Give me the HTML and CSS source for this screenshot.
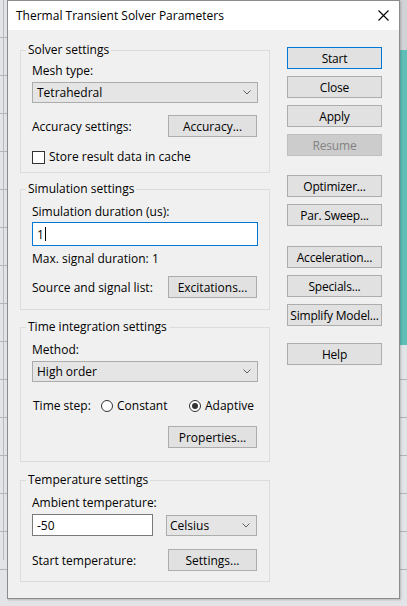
FILE: index.html
```html
<!DOCTYPE html>
<html lang="en">
<head>
<meta charset="utf-8">
<title>Thermal Transient Solver Parameters</title>
<link rel="stylesheet" href="styles.css">
</head>
<body>
<div class="desktop">
  <div class="dialog">
    <div class="titlebar">
      <span class="title">Thermal Transient Solver Parameters</span>
      <svg class="close" width="11" height="11" viewBox="0 0 11 11"><path d="M0.5 0.5 L10.5 10.5 M10.5 0.5 L0.5 10.5" stroke="#000" stroke-width="1.1" fill="none"/></svg>
    </div>
    <div class="client">
      <div class="groups">
        <fieldset class="group g-solver">
          <legend>Solver settings</legend>
          <div class="label mt5">Mesh type:</div>
          <div class="combo mt3"><span>Tetrahedral</span><svg class="chev" width="8" height="5" viewBox="0 0 8 5"><path d="M0.5 0.5 L4 4 L7.5 0.5" stroke="#606060" fill="none"/></svg></div>
          <div class="row mt12"><span>Accuracy settings:</span><span class="btn">Accuracy...</span></div>
          <div class="check mt12"><span class="box"></span><span>Store result data in cache</span></div>
        </fieldset>

        <fieldset class="group g-sim">
          <legend>Simulation settings</legend>
          <div class="label mt7">Simulation duration (us):</div>
          <div class="field focused mt2"><span>1</span><span class="caret"></span></div>
          <div class="label mt5">Max. signal duration: 1</div>
          <div class="row mt9"><span>Source and signal list:</span><span class="btn">Excitations...</span></div>
        </fieldset>

        <fieldset class="group g-time">
          <legend>Time integration settings</legend>
          <div class="label mt7">Method:</div>
          <div class="combo mt3"><span>High order</span><svg class="chev" width="8" height="5" viewBox="0 0 8 5"><path d="M0.5 0.5 L4 4 L7.5 0.5" stroke="#606060" fill="none"/></svg></div>
          <div class="steprow mt16">
            <span class="steplabel">Time step:</span>
            <span class="radio opt-constant"><span class="dot"></span>Constant</span>
            <span class="radio checked"><span class="dot"></span>Adaptive</span>
          </div>
          <div class="row end mt12"><span class="btn">Properties...</span></div>
        </fieldset>

        <fieldset class="group g-temp">
          <legend>Temperature settings</legend>
          <div class="label mt7">Ambient temperature:</div>
          <div class="row mt3">
            <div class="field temp"><span>-50</span></div>
            <div class="combo unit"><span>Celsius</span><svg class="chev" width="8" height="5" viewBox="0 0 8 5"><path d="M0.5 0.5 L4 4 L7.5 0.5" stroke="#606060" fill="none"/></svg></div>
          </div>
          <div class="row mt13"><span>Start temperature:</span><span class="btn">Settings...</span></div>
        </fieldset>
      </div>

      <div class="actions">
        <span class="abtn default">Start</span>
        <span class="abtn mt7">Close</span>
        <span class="abtn mt7">Apply</span>
        <span class="abtn disabled mt7">Resume</span>
        <span class="abtn mt19">Optimizer...</span>
        <span class="abtn mt7">Par. Sweep...</span>
        <span class="abtn mt20">Acceleration...</span>
        <span class="abtn mt7">Specials...</span>
        <span class="abtn mt7">Simplify Model...</span>
        <span class="abtn mt17">Help</span>
      </div>
    </div>
  </div>
</div>
</body>
</html>
```

FILE: styles.css
```css
* { box-sizing: border-box; }

html, body {
  margin: 0;
  padding: 0;
}

body {
  width: 407px;
  height: 606px;
  overflow: hidden;
  font-family: "Open Sans", "Noto Sans", sans-serif;
  font-size: 12px;
  color: #000;
}

/* desktop behind the dialog: grid lines plus the teal model view on the right */
.desktop {
  position: relative;
  width: 407px;
  height: 606px;
  background:
    linear-gradient(#5fbfb8, #5fbfb8) 400px 50px / 7px 295px no-repeat,
    linear-gradient(#d2d3d6, #d2d3d6) 400px 0 / 7px 50px no-repeat,
    linear-gradient(to right, transparent 3px, #b9babe 3px, #b9babe 4px, transparent 4px) 0 0 / 7px 560px no-repeat,
    repeating-linear-gradient(to bottom, transparent 0, transparent 37px, #b4b5ba 37px, #b4b5ba 38px),
    #e3e4e7;
}

.dialog {
  position: absolute;
  left: 7px;
  top: 0;
  width: 393px;
  height: 599px;
  background: #f0f0f0;
  border: 1px solid #8c8c8c;
  box-shadow: 1px 1px 2px rgba(0, 0, 0, 0.2);
  display: flex;
  flex-direction: column;
}

.titlebar {
  height: 29px;
  flex: none;
  background: #fff;
  display: flex;
  align-items: center;
  justify-content: space-between;
  padding: 0 10px 0 8px;
}

.title {
  font-size: 12px;
  line-height: 16px;
}

.close { display: block; }

.client {
  display: flex;
  align-items: flex-start;
  padding: 12px 0 0 12px;
}

.groups {
  width: 250px;
  display: flex;
  flex-direction: column;
}

.group {
  margin: 0;
  padding: 0 11px;
  border: 1px solid #dcdcdc;
  min-width: 0;
}

.group legend {
  padding: 0 2px;
  margin-left: -6px;
  line-height: 16px;
}

.g-solver { padding-bottom: 7px; }
.g-sim { margin-top: 8px; padding-bottom: 11px; }
.g-time { margin-top: 9px; padding-bottom: 13px; }
.g-temp { margin-top: 10px; padding-bottom: 10px; }

.label { line-height: 16px; }

.mt2 { margin-top: 2px; }
.mt3 { margin-top: 3px; }
.mt5 { margin-top: 5px; }
.mt7 { margin-top: 7px; }
.mt9 { margin-top: 9px; }
.mt12 { margin-top: 12px; }
.mt13 { margin-top: 13px; }
.mt16 { margin-top: 16px; }
.mt17 { margin-top: 17px; }
.mt19 { margin-top: 19px; }
.mt20 { margin-top: 20px; }

.combo {
  height: 21px;
  background: #e5e5e5;
  border: 1px solid #acacac;
  display: flex;
  align-items: center;
  justify-content: space-between;
  padding: 0 6px 0 4px;
}

.chev { display: block; }

.row {
  display: flex;
  align-items: center;
  justify-content: space-between;
  padding-right: 1px;
}

.row.end { justify-content: flex-end; }

.btn {
  width: 89px;
  height: 22px;
  background: #e1e1e1;
  border: 1px solid #adadad;
  display: flex;
  align-items: center;
  justify-content: center;
}

.check {
  display: flex;
  align-items: center;
  height: 16px;
  line-height: 16px;
}

.check .box {
  width: 13px;
  height: 13px;
  background: #fff;
  border: 1px solid #333;
  margin-right: 4px;
}

.field {
  height: 24px;
  background: #fff;
  border: 1px solid #7a7a7a;
  display: flex;
  align-items: center;
  padding: 0 4px;
}

.field.focused { border-color: #0078d7; }

.caret {
  width: 1px;
  height: 14px;
  background: #000;
  margin-left: 1px;
}

.field.temp {
  width: 121px;
  height: 22px;
}

.combo.unit {
  width: 91px;
  padding-left: 3px;
}

.steprow {
  display: flex;
  align-items: center;
  height: 16px;
  line-height: 16px;
  padding-left: 1px;
}

.steplabel { width: 68px; }

.radio {
  display: flex;
  align-items: center;
}

.opt-constant { width: 88px; }

.radio .dot {
  width: 12px;
  height: 12px;
  border: 1px solid #333;
  border-radius: 50%;
  background: #fff;
  margin-right: 4px;
  position: relative;
}

.radio.checked .dot::after {
  content: "";
  position: absolute;
  left: 2px;
  top: 2px;
  width: 6px;
  height: 6px;
  border-radius: 50%;
  background: #333;
}

.actions {
  width: 95px;
  margin-left: 17px;
  padding-top: 5px;
  display: flex;
  flex-direction: column;
}

.abtn {
  height: 22px;
  background: #e1e1e1;
  border: 1px solid #adadad;
  display: flex;
  align-items: center;
  justify-content: center;
  letter-spacing: -0.2px;
  white-space: nowrap;
}

.abtn.default { border-color: #0078d7; }

.abtn.disabled {
  background: #cccccc;
  border-color: #bfbfbf;
  color: #838383;
}
```
